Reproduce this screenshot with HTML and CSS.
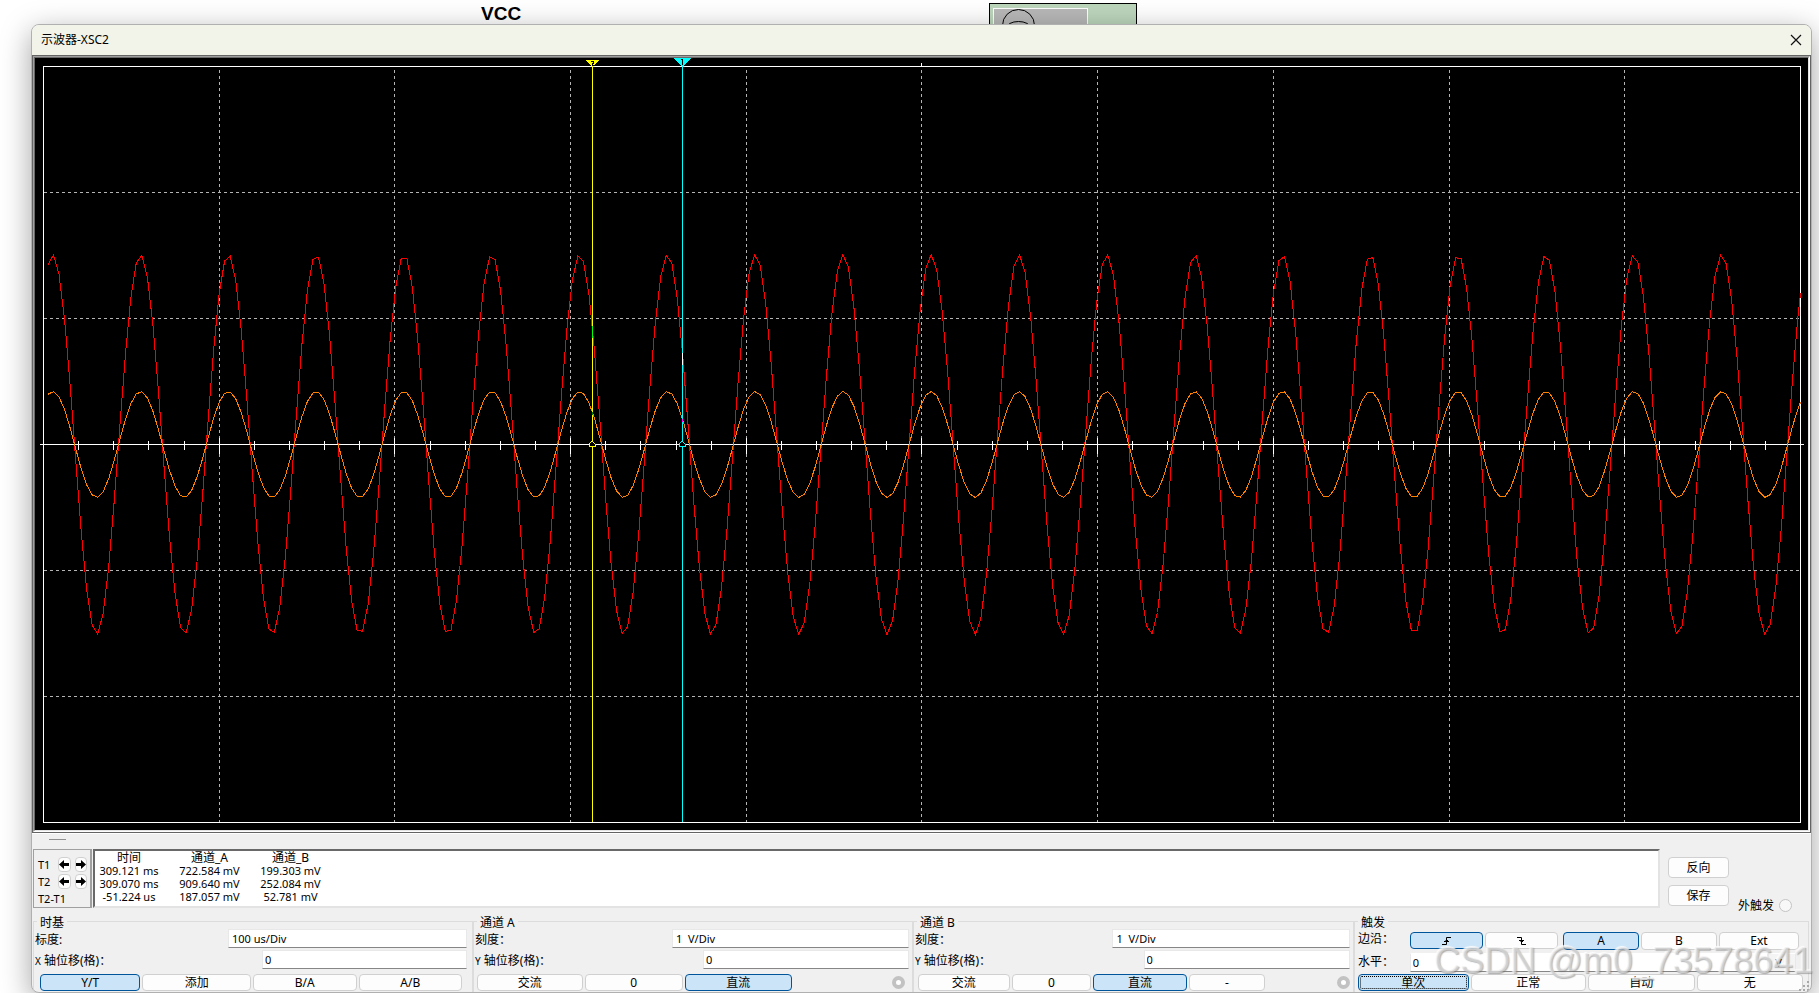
FILE: index.html
```html
<!DOCTYPE html>
<html lang="zh-CN">
<head>
<meta charset="utf-8">
<title>示波器-XSC2</title>
<link rel="stylesheet" href="styles.css">
</head>
<body>
<div class="schematic" aria-hidden="true">
  <span class="net-label">VCC</span>
  <svg class="instrument" width="148" height="24" viewBox="0 0 148 24">
    <rect x="0.5" y="0.5" width="147" height="40" fill="#bcd6bc" stroke="#000"/>
    <rect x="4.5" y="5.5" width="94" height="40" fill="#b8b8b8" stroke="#fff"/>
    <circle cx="29.5" cy="22.5" r="16" fill="none" stroke="#000"/>
    <ellipse cx="29.5" cy="25" rx="12" ry="6.5" fill="none" stroke="#000"/>
  </svg>
</div>

<main class="window">
  <header class="titlebar">
    <h1 class="title">示波器-XSC2</h1>
    <button class="close" type="button" aria-label="关闭">
      <svg width="12" height="12" viewBox="0 0 12 12"><path d="M1 1L11 11M11 1L1 11" stroke="#111" stroke-width="1.2"/></svg>
    </button>
  </header>

  <div class="bevel-outer"><div class="bevel-mid"><div class="bevel-inner">
    <svg class="screen" viewBox="0 0 1773 772" preserveAspectRatio="none" role="img" aria-label="通道A与通道B波形">
      <g id="grid"></g>
      <g id="axis"></g>
      <path id="wave-a" class="wave-a"/>
      <path id="wave-b" class="wave-b"/>
      <g id="cursors">
        <path class="cursor-2" d="M557.5 9V764"/>
        <path class="cursor-1" d="M647.5 9V764"/>
        <path d="M557.5 268V280" stroke="#0f0"/>
        <path d="M557.5 354V357" stroke="#008000"/>
        <path d="M647.5 295V307" stroke="#fff"/>
        <path d="M647.5 361V364" stroke="#f0f"/>
        <path d="M551 2H564L557.500 9Z" fill="#ff0"/>
        <path d="M556 3.500H558.500V5.500H557V7H559.500" fill="none" stroke="#000"/>
        <path d="M639 0H656L647.500 9Z" fill="#0ff"/>
        <path d="M645.500 1.500H647.500V6.500" fill="none" stroke="#000"/>
        <path d="M557 383L560 386V388H554V386Z" fill="#000" stroke="#ff0"/>
        <path d="M647 383L650 386V388H644V386Z" fill="#000" stroke="#0ff"/>
      </g>
    </svg>
  </div></div></div>

  <div class="strip"><span class="grip"></span></div>

  <section class="readout">
    <div class="cursor-box">
      <div class="cursor-row">
        <span class="cursor-name">T1</span>
        <button class="nudge" type="button" aria-label="T1 左移"><svg width="10" height="9" viewBox="0 0 10 9"><path d="M0 4.500L5 0V3H10V6H5V9Z"/></svg></button>
        <button class="nudge" type="button" aria-label="T1 右移"><svg width="10" height="9" viewBox="0 0 10 9"><path d="M10 4.500L5 0V3H0V6H5V9Z"/></svg></button>
      </div>
      <div class="cursor-row">
        <span class="cursor-name">T2</span>
        <button class="nudge" type="button" aria-label="T2 左移"><svg width="10" height="9" viewBox="0 0 10 9"><path d="M0 4.500L5 0V3H10V6H5V9Z"/></svg></button>
        <button class="nudge" type="button" aria-label="T2 右移"><svg width="10" height="9" viewBox="0 0 10 9"><path d="M10 4.500L5 0V3H0V6H5V9Z"/></svg></button>
      </div>
      <div class="cursor-row"><span>T2-T1</span></div>
    </div>
    <div class="values">
      <table>
        <thead><tr><th class="c1">时间</th><th class="c2">通道_A</th><th class="c3">通道_B</th></tr></thead>
        <tbody>
          <tr><td>309.121 ms</td><td>722.584 mV</td><td>199.303 mV</td></tr>
          <tr><td>309.070 ms</td><td>909.640 mV</td><td>252.084 mV</td></tr>
          <tr><td>-51.224 us</td><td>187.057 mV</td><td>52.781 mV</td></tr>
        </tbody>
      </table>
    </div>
    <div class="actions">
      <div class="action-buttons">
        <button class="btn" type="button">反向</button>
        <button class="btn" type="button">保存</button>
      </div>
      <label class="ext-trigger">外触发 <input class="dot" type="radio" name="ext"></label>
    </div>
  </section>

  <div class="groups">
    <fieldset class="group">
      <legend>时基</legend>
      <div class="row scale"><label for="tb-scale">标度:</label><input id="tb-scale" type="text" value="100 us/Div"></div>
      <div class="row offset"><label for="tb-pos"><small>X</small> 轴位移(格)：</label><input id="tb-pos" type="text" value="0"></div>
      <div class="buttons time-buttons">
        <button class="btn on" type="button">Y/T</button>
        <button class="btn" type="button">添加</button>
        <button class="btn" type="button">B/A</button>
        <button class="btn" type="button">A/B</button>
      </div>
    </fieldset>

    <fieldset class="group channel">
      <legend>通道 A</legend>
      <div class="row scale"><label for="a-scale">刻度：</label><input id="a-scale" type="text" value="1  V/Div"></div>
      <div class="row offset"><label for="a-pos"><small>Y</small> 轴位移(格)：</label><input id="a-pos" type="text" value="0"></div>
      <div class="buttons a-buttons">
        <button class="btn" type="button">交流</button>
        <button class="btn" type="button">0</button>
        <button class="btn on" type="button">直流</button>
        <input class="dot ring" type="radio" name="chan-a" aria-label="通道 A 端子">
      </div>
    </fieldset>

    <fieldset class="group channel">
      <legend>通道 B</legend>
      <div class="row scale"><label for="b-scale">刻度：</label><input id="b-scale" type="text" value="1  V/Div"></div>
      <div class="row offset"><label for="b-pos"><small>Y</small> 轴位移(格)：</label><input id="b-pos" type="text" value="0"></div>
      <div class="buttons b-buttons">
        <button class="btn" type="button">交流</button>
        <button class="btn" type="button">0</button>
        <button class="btn on" type="button">直流</button>
        <button class="btn" type="button">-</button>
        <input class="dot ring" type="radio" name="chan-b" aria-label="通道 B 端子">
      </div>
    </fieldset>

    <fieldset class="group trigger">
      <legend>触发</legend>
      <div class="edge-row">
        <span>边沿：</span>
        <button class="btn on" type="button" aria-label="上升沿"><svg width="10" height="10" viewBox="0 0 10 10"><path d="M0 8.500H4.500V1.500H9M2 5.500H7M3.500 4.500H6" fill="none" stroke="#000"/></svg></button>
        <button class="btn" type="button" aria-label="下降沿"><svg width="10" height="10" viewBox="0 0 10 10"><path d="M0 1.500H4.500V8.500H9M2 4.500H7M3.500 5.500H6" fill="none" stroke="#000"/></svg></button>
        <button class="btn on tall" type="button">A</button>
        <button class="btn tall" type="button">B</button>
        <button class="btn tall" type="button">Ext</button>
      </div>
      <div class="level-row"><label for="level">水平：</label><input id="level" type="text" value="0"><input class="unit" type="text" value="V" aria-label="单位"></div>
      <div class="buttons mode-buttons">
        <button class="btn on focus" type="button">单次</button>
        <button class="btn" type="button">正常</button>
        <button class="btn" type="button">自动</button>
        <button class="btn" type="button">无</button>
      </div>
    </fieldset>
  </div>
  <svg class="size-grip" width="12" height="12" viewBox="0 0 12 12" aria-hidden="true"><path d="M9 1h2v2h-2zM5 5h2v2h-2zM9 5h2v2h-2zM1 9h2v2h-2zM5 9h2v2h-2zM9 9h2v2h-2z" fill="#a8a8a8"/></svg>
</main>
<div class="watermark">CSDN @m0_73578641</div>
<script src="scope.js"></script>
</body>
</html>
```
FILE: styles.css
```css
* { box-sizing: border-box; }

body {
  margin: 0;
  height: 100vh;
  overflow: hidden;
  position: relative;
  display: flex;
  flex-direction: column;
  padding: 24px 7px 0 31px;
  background: #fff;
  color: #000;
  font: 11px/13px "Noto Sans", "Noto Sans CJK SC", sans-serif;
}

button, input { font: inherit; color: inherit; }
small { font-size: 10px; }

.schematic { position: absolute; inset: 0; }
.net-label {
  position: absolute;
  left: 481px;
  top: 3px;
  font: bold 19px/22px "Liberation Sans", Arial, sans-serif;
}
.instrument { position: absolute; left: 989px; top: 3px; }

.window {
  position: relative;
  flex: 1;
  min-height: 0;
  display: flex;
  flex-direction: column;
  border: 1px solid #b0b0b0;
  border-radius: 8px;
  overflow: hidden;
  background: #f0f0f0;
  box-shadow: 0 8px 30px rgba(0, 0, 0, .36);
}

.titlebar {
  height: 30px;
  flex: none;
  display: flex;
  align-items: center;
  justify-content: space-between;
  padding: 0 9px;
  background: #f3f4e9;
}
.title { margin: 0; font-size: 12px; font-weight: 400; line-height: 16px; }
.close { display: flex; padding: 0; border: 0; background: none; }

.bevel-outer, .bevel-mid, .bevel-inner {
  flex: 1;
  min-height: 0;
  display: flex;
  border: 1px solid #646464;
}
.bevel-mid { border-color: #a0a0a0 #fff #fff #a0a0a0; }
.bevel-inner { border-color: #696969 #e3e3e3 #e3e3e3 #696969; background: #000; }

.screen { flex: 1; min-width: 0; width: 100%; height: 100%; shape-rendering: crispEdges; }
.grid-line { stroke: #b4b4b4; stroke-dasharray: 3 3; }
.frame, .axis-line { fill: none; stroke: #fff; }
.wave-a { fill: none; stroke: #f00; }
.wave-b { fill: none; stroke: #ff8000; }
.cursor-1 { stroke: #0ff; }
.cursor-2 { stroke: #ff0; }

.strip { height: 16px; flex: none; padding: 5px 17px; border-top: 1px solid #fff; }
.grip { display: block; width: 17px; height: 1px; background: #909090; }

.readout { height: 59px; flex: none; display: flex; padding-left: 1px; }
.cursor-box {
  width: 59px;
  padding: 6px 3px 0 4px;
  border: 1px solid #a0a0a0;
  border-right-width: 2px;
}
.cursor-row { height: 17px; display: flex; align-items: center; gap: 4px; }
.cursor-name { width: 17px; }
.nudge {
  width: 13px;
  height: 15px;
  padding: 0;
  display: flex;
  align-items: center;
  justify-content: center;
  border: 1px solid #d0d0d0;
  border-radius: 4px;
  background: #fdfdfd;
}
.values {
  flex: 1;
  margin-left: 1px;
  padding-left: 2px;
  border: 2px solid;
  border-color: #696969 #e3e3e3 #e3e3e3 #696969;
  background: #fff;
}
.values table { border-collapse: collapse; table-layout: fixed; width: 226px; }
.values th, .values td { padding: 0; text-align: center; white-space: nowrap; line-height: 13px; }
.values th { font-size: 12px; font-weight: 400; }
.c1 { width: 64px; }
.c2 { width: 97px; }
.c3 { width: 65px; }

.actions { width: 151px; display: flex; padding: 8px 0 0 8px; }
.action-buttons { display: flex; flex-direction: column; gap: 7px; }
.action-buttons .btn { width: 61px; height: 21px; }
.ext-trigger { align-self: flex-end; display: flex; align-items: center; gap: 5px; margin: 0 0 -4px 9px; font-size: 12px; }

.btn {
  min-width: 0;
  height: 17px;
  padding: 0;
  display: flex;
  align-items: center;
  justify-content: center;
  border: 1px solid #d0d0d0;
  border-radius: 4px;
  background: #fdfdfd;
  font-size: 12px;
  line-height: 14px;
}
.btn.on { background: #cce4f7; border-color: #005499; }
.btn.focus { outline: 1px dotted #000; outline-offset: -3px; }

.dot {
  appearance: none;
  width: 13px;
  height: 13px;
  margin: 0;
  border: 1px solid #c4c4c4;
  border-radius: 50%;
  background: #f8f8f8;
}
.dot.ring { border: 4px solid #c2c2c2; background: #fff; }

.groups {
  flex: none;
  display: grid;
  grid-template-columns: 440fr 440fr 441fr 455fr;
  padding: 6px 2px 0 1px;
}
.group {
  min-width: 0;
  margin: 0;
  padding: 0 5px 1px 1px;
  border: 1px solid #dcdcdc;
  border-bottom: 0;
}
.group.channel { padding-right: 3px; }
.group legend { margin-left: 2px; padding: 3px 3px 0; font-size: 12px; line-height: 12px; }
.row { display: grid; height: 19px; margin-bottom: 2px; align-items: center; font-size: 12px; }
.row.scale { grid-template-columns: 193fr 239fr; }
.row.offset { grid-template-columns: 227fr 205fr; }
.channel .row.scale { grid-template-columns: 197fr 237fr; }
.channel .row.offset { grid-template-columns: 228fr 206fr; }
.row label, .edge-row span, .level-row label { white-space: nowrap; padding-top: 2px; }
.row input, .level-row input {
  min-width: 0;
  width: 100%;
  height: 19px;
  padding: 0 3px;
  border: 1px solid #e8e8e8;
  border-bottom-color: #868686;
  background: #fff;
  font-size: 11px;
}
.row.offset input { padding: 0 2px; }

.buttons { display: grid; gap: 2px; margin-top: 5px; align-items: center; }
.time-buttons { grid-template-columns: 100fr 108fr 103fr 103fr; padding: 0 5px; }
.a-buttons { grid-template-columns: 106fr 98fr 108fr 96fr 13px; padding: 0 4px 0 2px; }
.b-buttons { grid-template-columns: 92fr 80fr 94fr 77fr 68fr 13px; padding-left: 3px; }
.ring { grid-column: -2; }

.trigger { padding-left: 3px; font-size: 12px; }
.trigger legend { margin-left: 0; }
.edge-row {
  display: grid;
  grid-template-columns: 50fr 73fr 73fr 79fr 76fr 80fr;
  gap: 2px;
  height: 21px;
  padding: 3px 4px 0 0;
  align-items: start;
}
.edge-row .tall { height: 18px; }
.edge-row .tall.on { margin-left: 3px; }
.edge-row span { padding-top: 0; }
.level-row { display: grid; grid-template-columns: 52fr 360fr 28fr; height: 19px; padding-right: 7px; margin-top: 3px; }
.level-row input { border-top-color: #fff; padding: 0 2px; }
.level-row .unit { background: #f4f4f4; padding-left: 6px; }
.mode-buttons { grid-template-columns: 110fr 115fr 106fr 106fr; margin-top: 2px; }

.size-grip { position: absolute; right: 1px; bottom: 0; }

.watermark {
  position: absolute;
  right: 6px;
  bottom: 16px;
  font: 36px/32px "Liberation Sans", Arial, sans-serif;
  color: rgba(232, 232, 232, .5);
  text-shadow: 1px 1px 1px rgba(110, 110, 110, .5), -1px -1px 1px rgba(255, 255, 255, .8);
  pointer-events: none;
}
```
FILE: scope.js
```js
const NS = "http://www.w3.org/2000/svg";
const box = { left: 8.5, top: 8.5, right: 1765.5, bottom: 764.5 };
const midY = 386.5;
const divX = (box.right - box.left) / 10;
const divY = (box.bottom - box.top) / 6;

function line(parent, x1, y1, x2, y2, cls) {
  const el = document.createElementNS(NS, "line");
  el.setAttribute("x1", x1);
  el.setAttribute("y1", y1);
  el.setAttribute("x2", x2);
  el.setAttribute("y2", y2);
  el.setAttribute("class", cls);
  document.getElementById(parent).appendChild(el);
}

for (let i = 1; i < 10; i++) {
  const x = Math.ceil(box.left + i * divX) - 0.5;
  line("grid", x, 12, x, box.bottom, "grid-line");
}
for (let i = 1; i < 6; i++) {
  const y = box.top + i * divY;
  if (i !== 3) line("grid", box.left, y, box.right, y, "grid-line");
}

const frame = document.createElementNS(NS, "rect");
frame.setAttribute("x", box.left);
frame.setAttribute("y", box.top);
frame.setAttribute("width", box.right - box.left);
frame.setAttribute("height", box.bottom - box.top);
frame.setAttribute("class", "frame");
document.getElementById("grid").appendChild(frame);

line("axis", 5, midY, 1769, midY, "axis-line");
for (let i = 1; i < 50; i++) {
  const x = Math.ceil(box.left + i * divX / 5) - 0.5;
  const major = i % 5 === 0;
  line("axis", x, major ? 380 : 383, x, major ? 396 : 392, "axis-line");
}
line("axis", 886.5, 5, 886.5, 9, "axis-line");

function trace(id, amplitude) {
  const period = 87.85, peak = 17.6, step = 5.52;
  let d = "";
  for (let x = 13; x < box.right + step; x += step) {
    const px = Math.min(x, box.right);
    const y = midY - amplitude * Math.cos(2 * Math.PI * (px - peak) / period);
    d += (d ? "L" : "M") + px.toFixed(1) + " " + y.toFixed(1);
  }
  document.getElementById(id).setAttribute("d", d);
}
trace("wave-a", 190);
trace("wave-b", 53);
```
